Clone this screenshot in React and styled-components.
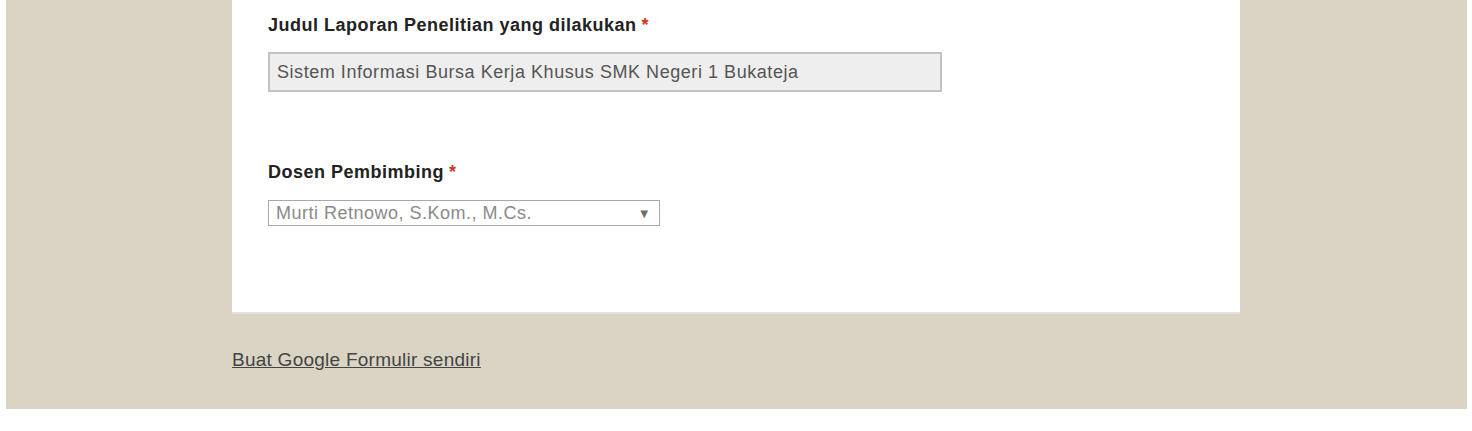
import React from 'react';
import styled, { createGlobalStyle } from 'styled-components';

const GlobalStyle = createGlobalStyle`
  html, body {
    margin: 0;
    padding: 0;
    background: #ffffff;
  }
  body {
    font-family: "Liberation Sans", Arial, sans-serif;
  }
`;

// 外側のベージュ背景
const Page = styled.div`
  margin: 0 5px 0 6px;
  height: 409px;
  background-color: #dad4c4;
  padding-left: 226px;
`;

const Column = styled.div`
  width: 1008px;
`;

// フォームのカード
const Card = styled.div`
  background: #ffffff;
  border-bottom: 2px solid #e3e3e3;
  padding: 15px 36px 0;
  height: 297px;
`;

const Field = styled.div`
  margin-bottom: ${props => props.gap || 0}px;
`;

const Label = styled.div`
  font-size: 18px;
  font-weight: bold;
  letter-spacing: 0.5px;
  line-height: 20px;
  color: #222222;
  margin-bottom: ${props => props.space}px;
`;

const Required = styled.span`
  color: #c43b1d;
  margin-left: 5px;
`;

const TextInput = styled.input`
  box-sizing: border-box;
  width: 674px;
  height: 40px;
  padding: 0 7px;
  background: #eeeeee;
  border: 2px solid #c2c2c2;
  font-family: "Liberation Sans", Arial, sans-serif;
  font-size: 18px;
  letter-spacing: 0.55px;
  color: #555555;
  outline: none;
`;

const SelectBox = styled.div`
  box-sizing: border-box;
  width: 392px;
  height: 26px;
  border: 1px solid #a9a9a9;
  display: flex;
  align-items: center;
  justify-content: space-between;
  padding: 0 8px 0 7px;
  font-size: 18px;
  letter-spacing: 0.5px;
  color: #8a8a8a;
  background: #ffffff;
`;

const Arrow = styled.span`
  font-size: 13px;
  color: #6e6e6e;
`;

// フッターリンク
const FooterLink = styled.a`
  display: inline-block;
  margin-top: 35px;
  font-size: 19px;
  letter-spacing: 0.25px;
  color: #444444;
  text-decoration: underline;
`;

const App = () => {
    return (
        <>
            <GlobalStyle />
            <Page>
                <Column>
                    <Card>
                        <Field gap={70}>
                            <Label space={17}>
                                Judul Laporan Penelitian yang dilakukan<Required>*</Required>
                            </Label>
                            <TextInput
                                readOnly
                                value="Sistem Informasi Bursa Kerja Khusus SMK Negeri 1 Bukateja"
                            />
                        </Field>
                        <Field>
                            <Label space={18}>
                                Dosen Pembimbing<Required>*</Required>
                            </Label>
                            <SelectBox>
                                <span>Murti Retnowo, S.Kom., M.Cs.</span>
                                <Arrow>▼</Arrow>
                            </SelectBox>
                        </Field>
                    </Card>
                    <FooterLink href="#">Buat Google Formulir sendiri</FooterLink>
                </Column>
            </Page>
        </>
    );
};

export default App;
